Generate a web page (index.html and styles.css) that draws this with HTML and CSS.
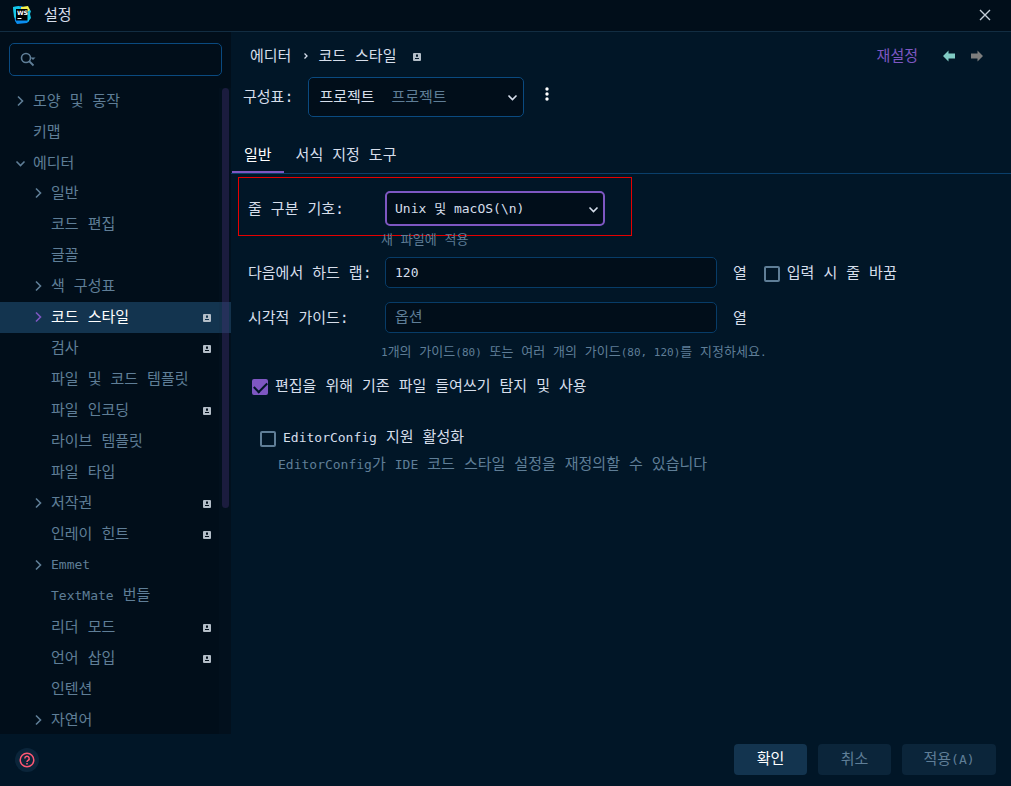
FILE: index.html
```
<!DOCTYPE html>
<html lang="ko">
	<head>
		<meta charset="utf-8">
		<title>설정</title>
		<link rel="stylesheet" href="styles.css">
	</head>
	<body>
		<!-- 공통 아이콘 -->
		<svg class="defs" width="0" height="0">
			<symbol id="right" viewBox="0 0 16 16"><path d="M5 3.500l4.500 4.500L5 12.500" fill="none" stroke="currentColor" stroke-width="1.600"/></symbol>
			<symbol id="down" viewBox="0 0 16 16"><path d="M3.500 6.500L7.500 10.500 11.500 6.500" fill="none" stroke="currentColor" stroke-width="1.600"/></symbol>
			<symbol id="project" viewBox="0 0 8 8"><path fill-rule="evenodd" fill="currentColor" d="M1 0h6a1 1 0 0 1 1 1v6a1 1 0 0 1-1 1H1a1 1 0 0 1-1-1V1a1 1 0 0 1 1-1zM3 1.500v2.200h2V1.500zM2 5v1h4V5z"/></symbol>
			<symbol id="arrow" viewBox="0 0 12 12"><path fill="currentColor" d="M0 6l5.500-5.500V3.500H12v5H5.500v3z"/></symbol>
		</svg>

		<header class="titlebar">
			<svg class="logo" width="18" height="18" viewBox="0 0 18 18">
				<path fill="#0a8df0" d="M0 1l8-1 7 3 1 12-2 2-10 1-2-3z"/>
				<path fill="#16c8e8" d="M0 1l6-1 3 4-6 9-2-2zM15 2l3 3-1 3 1 4-3 4-2-5z"/>
				<path fill="#f4f04c" d="M8 1l7-1 2 4-5 3-4-3z"/>
				<rect x="3" y="3" width="11.500" height="11.500" fill="#000"/>
				<text x="4" y="9" class="logo-text">WS</text>
				<rect x="4.500" y="12" width="4" height="1" fill="#fff"/>
			</svg>
			<h1>설정</h1>
			<button class="icon-btn close" aria-label="닫기"><svg width="12" height="12" viewBox="0 0 12 12"><path d="M1 1l10 10M11 1L1 11" stroke="currentColor" stroke-width="1.400"/></svg></button>
		</header>

		<div class="body">
			<aside class="sidebar">
				<div class="search">
					<svg width="18" height="16" viewBox="0 0 18 16"><circle cx="6" cy="6" r="4.500" fill="none" stroke="currentColor" stroke-width="1.600"/><path d="M9 9l4.500 4.500" stroke="currentColor" stroke-width="1.800"/><path d="M10.500 5.500h5L13 8z" fill="currentColor"/></svg>
					<input type="text" aria-label="검색">
				</div>
				<div class="tree-wrap">
					<ul class="tree">
						<li class="top"><svg class="chev"><use href="#right"/></svg><span>모양 및 동작</span></li>
						<li class="top"><i class="chev"></i><span>키맵</span></li>
						<li class="top"><svg class="chev"><use href="#down"/></svg><span>에디터</span></li>
						<li><svg class="chev"><use href="#right"/></svg><span>일반</span></li>
						<li><i class="chev"></i><span>코드 편집</span></li>
						<li><i class="chev"></i><span>글꼴</span></li>
						<li><svg class="chev"><use href="#right"/></svg><span>색 구성표</span></li>
						<li class="selected"><svg class="chev"><use href="#right"/></svg><span>코드 스타일</span><svg class="proj"><use href="#project"/></svg></li>
						<li><i class="chev"></i><span>검사</span><svg class="proj"><use href="#project"/></svg></li>
						<li><i class="chev"></i><span>파일 및 코드 템플릿</span></li>
						<li><i class="chev"></i><span>파일 인코딩</span><svg class="proj"><use href="#project"/></svg></li>
						<li><i class="chev"></i><span>라이브 템플릿</span></li>
						<li><i class="chev"></i><span>파일 타입</span></li>
						<li><svg class="chev"><use href="#right"/></svg><span>저작권</span><svg class="proj"><use href="#project"/></svg></li>
						<li><i class="chev"></i><span>인레이 힌트</span><svg class="proj"><use href="#project"/></svg></li>
						<li><svg class="chev"><use href="#right"/></svg><span class="latin">Emmet</span></li>
						<li><i class="chev"></i><span><span class="latin">TextMate</span> 번들</span></li>
						<li><i class="chev"></i><span>리더 모드</span><svg class="proj"><use href="#project"/></svg></li>
						<li><i class="chev"></i><span>언어 삽입</span><svg class="proj"><use href="#project"/></svg></li>
						<li><i class="chev"></i><span>인텐션</span></li>
						<li><svg class="chev"><use href="#right"/></svg><span>자연어</span></li>
					</ul>
					<div class="scroll"><div class="thumb"></div></div>
				</div>
			</aside>

			<main class="content">
				<div class="crumbs">
					<span>에디터</span>
					<svg class="sep" width="4" height="6" viewBox="0 0 4 6"><path d="M0.500 0.500L3 3 0.500 5.500" fill="none" stroke="currentColor" stroke-width="1.300"/></svg>
					<span>코드 스타일</span>
					<svg class="proj"><use href="#project"/></svg>
					<a class="reset" href="#">재설정</a>
					<button class="icon-btn back" aria-label="뒤로"><svg width="12" height="12"><use href="#arrow"/></svg></button>
					<button class="icon-btn forward" aria-label="앞으로" disabled><svg width="12" height="12"><use href="#arrow"/></svg></button>
				</div>

				<div class="scheme">
					<label for="scheme">구성표:</label>
					<div class="select scheme-select">
						<select id="scheme"><option>프로젝트</option></select>
						<span class="scheme-hint">프로젝트</span>
						<svg class="caret"><use href="#down"/></svg>
					</div>
					<button class="icon-btn more" aria-label="더보기"><svg width="4" height="14" viewBox="0 0 4 14" fill="currentColor"><circle cx="2" cy="2" r="1.700"/><circle cx="2" cy="7" r="1.700"/><circle cx="2" cy="12" r="1.700"/></svg></button>
				</div>

				<nav class="tabs">
					<a class="active" href="#">일반</a>
					<a href="#">서식 지정 도구</a>
				</nav>

				<form class="form">
					<div class="row marked">
						<label for="sep">줄 구분 기호:</label>
						<div class="select sep-select">
							<select id="sep"><option>Unix 및 macOS(\n)</option></select>
							<svg class="caret"><use href="#down"/></svg>
						</div>
					</div>
					<p class="hint sep-hint">새 파일에 적용</p>

					<div class="row wrap-row">
						<label for="wrap">다음에서 하드 랩:</label>
						<input class="field" id="wrap" type="text" value="120">
						<span class="unit">열</span>
						<label class="check"><input type="checkbox"><span>입력 시 줄 바꿈</span></label>
					</div>
					<div class="row guide-row">
						<label for="guides">시각적 가이드:</label>
						<input class="field" id="guides" type="text" placeholder="옵션">
						<span class="unit">열</span>
					</div>
					<p class="hint"><span class="latin">1</span>개의 가이드<span class="latin">(80)</span> 또는 여러 개의 가이드<span class="latin">(80, 120)</span>를 지정하세요<span class="latin">.</span></p>

					<label class="check detect"><input type="checkbox" checked><span>편집을 위해 기존 파일 들여쓰기 탐지 및 사용</span></label>
					<label class="check editorconfig"><input type="checkbox"><span><span class="latin">EditorConfig</span> 지원 활성화</span></label>
					<p class="note"><span class="latin">EditorConfig</span>가 <span class="latin">IDE</span> 코드 스타일 설정을 재정의할 수 있습니다</p>
				</form>
			</main>
		</div>

		<footer class="footer">
			<button class="help" aria-label="도움말"><svg width="16" height="16" viewBox="0 0 16 16" fill="none" stroke="currentColor" stroke-width="1.500"><circle cx="8" cy="8" r="6.800"/><path d="M5.800 6.500a2.200 2.200 0 1 1 3.300 1.900C8.300 8.900 8 9.200 8 10"/><path d="M8 11v1.500"/></svg></button>
			<button class="btn primary">확인</button>
			<button class="btn" disabled>취소</button>
			<button class="btn apply" disabled>적용<span class="latin">(A)</span></button>
		</footer>
	</body>
</html>
```
FILE: styles.css
```
*{
	box-sizing: border-box;
	margin: 0;padding: 0;
}
body{
	display: flex;
	flex-direction: column;
	height: 100vh;
	overflow: hidden;
	background-color: #011627;
	color: #d6deeb;
	font: 15px/20px "DejaVu Sans Mono", "Noto Sans CJK KR", monospace;
}
button,input,select{
	font: inherit;
	color: inherit;
}
a{
	color: inherit;
	text-decoration: none;
}
svg{
	display: block;
	flex: none;
}
.defs{
	position: absolute;
}
/* 영문은 한글보다 작게 */
.latin{
	font-size: 13px;
}
.icon-btn{
	background: none;
	border: none;
}

/* 제목 표시줄 */
.titlebar{
	flex: none;
	display: flex;
	align-items: center;
	height: 32px;
	padding: 0 20px 2px 13px;
	background-color: #010e1a;
	border-bottom: 1px solid #122d42;
}
.titlebar h1{
	margin-left: 13px;
	font-size: 15px;
	font-weight: normal;
}
.logo-text{
	font: bold 6px "DejaVu Sans", sans-serif;
	fill: #fff;
}
.close{
	margin-left: auto;
	color: #c5ced8;
}

.body{
	flex: 1;
	display: flex;
	min-height: 0;
}

/* 왼쪽 트리 */
.sidebar{
	flex: none;
	display: flex;
	flex-direction: column;
	width: 231px;
	background-color: #010e1a;
	color: #5f7e97;
}
.search{
	flex: none;
	display: flex;
	align-items: center;
	height: 33px;
	margin: 11px 9px 9px;
	padding: 0 10px;
	border: 1px solid #0a4a80;
	border-radius: 5px;
}
.search input{
	flex: 1;
	min-width: 0;
	background: none;
	border: none;
	outline: none;
}
.tree-wrap{
	position: relative;
	flex: 1;
	overflow: hidden;
}
.tree{
	list-style: none;
}
.tree li{
	display: flex;
	align-items: center;
	height: 31px;
	padding: 0 20px 2px 31px;
}
.tree li.top{
	padding: 0 20px 0 13px;
}
.chev{
	width: 16px;height: 16px;
	margin-right: 4px;
}
.proj{
	width: 8px;height: 8px;
	color: #b4bec8;
}
.tree .proj{
	margin: 3px 0 0 auto;
}
.tree .selected{
	background-color: #13344f;
	color: #fff;
}
.selected .chev{
	color: #7e57c2;
}
/* 스크롤바 */
.scroll{
	position: absolute;
	top: 3px;right: 0;bottom: 0;
	width: 12px;
	background-color: rgba(20, 40, 60, 0.1);
}
.thumb{
	width: 7px;height: 65%;
	margin-left: 3px;
	border-radius: 4px;
	background-color: rgba(64, 48, 112, 0.4);
}

/* 오른쪽 내용 */
.content{
	flex: 1;
	min-width: 0;
}
.crumbs{
	display: flex;
	align-items: center;
	height: 45px;
	padding: 2px 28px 0 19px;
}
.crumbs .sep{
	margin: 0 10px 0 13px;
}
.crumbs .proj{
	margin: 3px 0 0 17px;
}
.reset{
	margin-left: auto;
	color: #7e57c2;
}
.back{
	margin: 0 16px 0 25px;
	color: #80cbc4;
}
.forward{
	color: #7d7d7d;
	transform: scaleX(-1);
}
.scheme{
	display: flex;
	align-items: center;
	padding-left: 12px;
}
.select{
	position: relative;
}
.select select{
	width: 100%;height: 100%;
	padding: 0 10px;
	appearance: none;
	background-color: #010e1a;
	border: 1px solid #0a4a80;
	border-radius: 5px;
	outline: none;
}
.caret{
	position: absolute;
	right: 3px;
	top: 50%;
	width: 16px;height: 16px;
	margin-top: -8px;
	pointer-events: none;
}
.scheme-select{
	width: 216px;height: 40px;
	margin-left: 15px;
}
.scheme-hint{
	position: absolute;
	left: 83px;
	top: 10px;
	color: #5f7e97;
	pointer-events: none;
}
.more{
	margin: 0 0 6px 21px;
	color: #fff;
}
.tabs{
	display: flex;
	height: 38px;
	margin-top: 19px;
	padding-left: 1px;
	border-bottom: 1px solid #0a3f6b;
}
.tabs a{
	height: 37px;
	padding: 9px 12px 0;
}
.tabs a.active{
	color: #fff;
	border-bottom: 2px solid #7e57c2;
}

/* 설정 항목 */
.form{
	padding: 3px 7px 0;
}
.row{
	display: flex;
	align-items: center;
	padding-left: 10px;
}
.row > label:first-child{
	width: 137px;
}
.marked{
	width: 394px;
	height: 59px;
	padding: 4px 0 0 9px;
	border: 1px solid #e60000;
}
.sep-select{
	width: 220px;height: 35px;
}
.sep-select select{
	padding: 0 8px;
	border: 2px solid #7e57c2;
	font-size: 13px;
}
.hint{
	margin-left: 143px;
	font-size: 13px;
	line-height: 16px;
	color: #5f7e97;
}
.hint .latin{
	font-size: 11px;
}
.sep-hint{
	margin-top: -4px;
}
.wrap-row{
	margin-top: 9px;
}
.guide-row{
	margin: 14px 0 11px;
}
.field{
	width: 332px;height: 31px;
	padding: 0 9px;
	background-color: #010e1a;
	border: 1px solid #073c68;
	border-radius: 5px;
	font-size: 13px;
	outline: none;
}
.field::placeholder{
	color: #5f7e97;
	font-size: 15px;
}
.unit{
	margin: 0 17px 0 16px;
}
.check{
	display: flex;
	align-items: center;
}
.check input{
	appearance: none;
	width: 16px;height: 16px;
	margin: 2px 7px 0 0;
	border: 2px solid #5f7e97;
	border-radius: 2px;
}
.check input:checked{
	background-color: #7e57c2;
	border-color: #7e57c2;
}
.check input:checked::before{
	content: "";
	display: block;
	width: 11px;height: 6px;
	margin-top: 1px;
	border-left: 2px solid #011627;
	border-bottom: 2px solid #011627;
	transform: rotate(-45deg);
}
.detect{
	margin: 15px 0 0 14px;
}
.editorconfig{
	margin: 31px 0 0 22px;
}
.note{
	margin: 6px 0 0 40px;
	color: #5f7e97;
}

/* 하단 버튼 */
.footer{
	flex: none;
	display: flex;
	align-items: center;
	gap: 11px;
	height: 52px;
	padding: 0 15px 2px;
}
.help{
	display: flex;
	align-items: center;
	justify-content: center;
	width: 24px;height: 24px;
	margin: 2px auto 0 0;
	background-color: #0b253a;
	border: none;
	border-radius: 50%;
	color: #ff5874;
}
.btn{
	width: 73px;height: 31px;
	background-color: #0b253a;
	border: none;
	border-radius: 4px;
	color: #5f7e97;
}
.btn.primary{
	background-color: #13344f;
	color: #fff;
}
.btn.apply{
	width: 94px;
}
```
